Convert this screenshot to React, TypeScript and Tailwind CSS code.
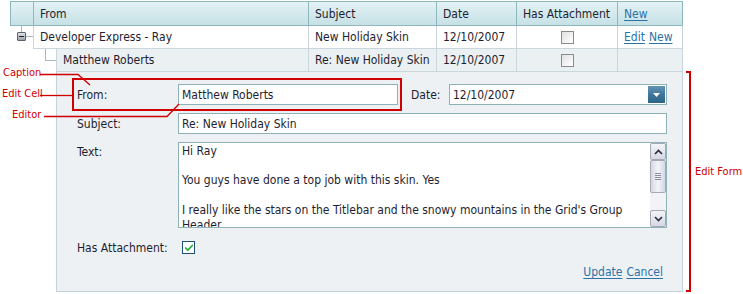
import { Check } from 'lucide-react';

const font = "font-['DejaVu_Sans_Condensed','DejaVu_Sans',sans-serif]";

// Column widths of the grid (indent, From, Subject, Date, Has Attachment, command)
const headerCell = 'flex h-full items-center border-l border-[#8fb8be] px-[6px]';
const dataCell = 'flex h-full items-center border-l border-[#c9d7dc] px-[6px]';

const GridCheck = () => (
  <span className="block h-[13px] w-[13px] border border-[#8a8a8a] bg-gradient-to-br from-[#e2e2e2] to-white" />
);

const Link = ({ children }: { children: string }) => (
  <a className="cursor-pointer text-[#2a73a8] underline underline-offset-2">{children}</a>
);

const Editor = ({ value, className = '' }: { value: string; className?: string }) => (
  <div className={`flex h-[21px] items-center border border-[#8db3b9] bg-white pl-[3px] ${className}`}>
    {value}
  </div>
);

const ScrollButton = ({ up }: { up?: boolean }) => (
  <div className="flex h-[17px] items-center justify-center rounded-[2px] border border-[#a4a9b8] bg-gradient-to-b from-[#f4f4f8] to-[#d6d8e2]">
    <svg width="9" height="6" viewBox="0 0 9 6">
      <path
        d={up ? 'M1 5 L4.5 1.5 L8 5' : 'M1 1 L4.5 4.5 L8 1'}
        fill="none"
        stroke="#2a2a3a"
        strokeWidth="1.6"
      />
    </svg>
  </div>
);

export default function App() {
  return (
    <div className={`relative h-[294px] w-[743px] overflow-hidden bg-white text-[12px] text-[#1e1e30] ${font}`}>
      <div className="ml-[10px] mt-[1px] w-[673px]">
        {/* Header */}
        <div className="flex h-[25px] border border-[#8fb8be] bg-gradient-to-b from-[#e3f2f5] to-[#c6e1e6]">
          <div className="w-[22px]" />
          <div className={`${headerCell} w-[275px]`}>From</div>
          <div className={`${headerCell} w-[128px]`}>Subject</div>
          <div className={`${headerCell} w-[80px]`}>Date</div>
          <div className={`${headerCell} w-[101px]`}>Has Attachment</div>
          <div className={`${headerCell} flex-1`}>
            <Link>New</Link>
          </div>
        </div>

        {/* Master row */}
        <div className="flex h-[23px]">
          <div className="relative w-[23px]">
            <span className="absolute left-[11px] top-0 h-[6px] w-px bg-[#a7b9c0]" />
            <span className="absolute left-[15px] top-[10px] h-px w-[8px] bg-[#a7b9c0]" />
            <span className="absolute left-[7px] top-[6px] flex h-[9px] w-[9px] items-center justify-center rounded-[1px] border border-[#5b646c] bg-gradient-to-b from-[#dfe3e6] to-[#9aa3aa]">
              <span className="h-px w-[5px] bg-[#222]" />
            </span>
          </div>
          <div className="flex flex-1 border-b border-r border-[#c9d7dc]">
            <div className={`${dataCell} w-[275px]`}>Developer Express - Ray</div>
            <div className={`${dataCell} w-[128px]`}>New Holiday Skin</div>
            <div className={`${dataCell} w-[80px]`}>12/10/2007</div>
            <div className={`${dataCell} w-[101px] justify-center`}>
              <GridCheck />
            </div>
            <div className={`${dataCell} flex-1 gap-[4px]`}>
              <Link>Edit</Link>
              <Link>New</Link>
            </div>
          </div>
        </div>

        {/* Detail row */}
        <div className="flex h-[23px]">
          <div className="w-[23px]" />
          <div className="relative w-[23px]">
            <span className="absolute left-[12px] top-0 h-[12px] w-px bg-[#a7b9c0]" />
            <span className="absolute left-[12px] top-[11px] h-px w-[11px] bg-[#a7b9c0]" />
          </div>
          <div className="flex flex-1 border-b border-r border-[#c9d7dc] bg-[#ebf0f3]">
            <div className={`${dataCell} w-[252px]`}>Matthew Roberts</div>
            <div className={`${dataCell} w-[128px]`}>Re: New Holiday Skin</div>
            <div className={`${dataCell} w-[80px]`}>12/10/2007</div>
            <div className={`${dataCell} w-[101px] justify-center`}>
              <GridCheck />
            </div>
            <div className={`${dataCell} flex-1`} />
          </div>
        </div>

        {/* Edit form */}
        <div className="flex h-[220px]">
          <div className="w-[46px]" />
          <div className="flex flex-1 flex-col border-b border-l border-r border-[#c3d3d9] bg-[#edf1f4] pl-[20px] pr-[15px] pt-[12px]">
            <div className="flex h-[21px] items-center">
              <div className="w-[101px]">From:</div>
              <Editor value="Matthew Roberts" className="w-[220px]" />
              <div className="ml-[13px] w-[38px]">Date:</div>
              <div className="flex h-[21px] flex-1 items-center justify-between border border-[#8db3b9] bg-white pl-[3px] pr-px">
                <span>12/10/2007</span>
                <span className="flex h-[17px] w-[17px] items-center justify-center bg-gradient-to-b from-[#6394b6] via-[#3f769b] to-[#2c6488]">
                  <svg width="9" height="6" viewBox="0 0 9 6">
                    <path d="M1 1 H8 L4.5 5 Z" fill="#fff" />
                  </svg>
                </span>
              </div>
            </div>
            <div className="mt-[8px] flex h-[21px] items-center">
              <div className="w-[101px]">Subject:</div>
              <Editor value="Re: New Holiday Skin" className="flex-1" />
            </div>
            <div className="mt-[8px] flex h-[86px]">
              <div className="w-[101px] pt-[1px]">Text:</div>
              <div className="flex flex-1 border border-[#8db3b9] bg-white">
                <div className="flex-1 overflow-hidden pl-[3px] pt-px leading-[14.7px]">
                  <p>Hi Ray</p>
                  <p>&nbsp;</p>
                  <p>You guys have done a top job with this skin. Yes</p>
                  <p>&nbsp;</p>
                  <p>I really like the stars on the Titlebar and the snowy mountains in the Grid's Group</p>
                  <p>Header</p>
                </div>
                <div className="flex w-[16px] flex-col bg-[#f4f4f6]">
                  <ScrollButton up />
                  <div className="flex h-[33px] items-center justify-center rounded-[2px] border border-[#a4a9b8] bg-gradient-to-r from-[#d4d8e4] via-[#f4f4f8] to-[#d4d8e4]">
                    <div className="flex flex-col gap-[1px]">
                      <span className="h-px w-[6px] bg-[#8a8fa0]" />
                      <span className="h-px w-[6px] bg-[#8a8fa0]" />
                      <span className="h-px w-[6px] bg-[#8a8fa0]" />
                      <span className="h-px w-[6px] bg-[#8a8fa0]" />
                    </div>
                  </div>
                  <div className="flex-1 bg-[#f3f3f7]" />
                  <ScrollButton />
                </div>
              </div>
            </div>
            <div className="mt-[13px] flex h-[13px] items-center">
              <div className="w-[105px]">Has Attachment:</div>
              <span className="flex h-[13px] w-[13px] items-center justify-center border border-[#1f4f78] bg-white">
                <Check className="h-[10px] w-[10px] text-[#22a838]" strokeWidth={4} />
              </span>
            </div>
            <div className="mt-[9px] flex justify-end gap-[4px] pr-[4px]">
              <Link>Update</Link>
              <Link>Cancel</Link>
            </div>
          </div>
        </div>
      </div>

      {/* Annotations */}
      <div className="absolute left-[72px] top-[78px] h-[33px] w-[330px] border-2 border-[#d00000]" />
      <span className="absolute left-[3px] top-[66px] text-[11px] leading-[14px] text-[#d00000]">Caption</span>
      <span className="absolute left-[2px] top-[87px] text-[11px] leading-[14px] text-[#d00000]">Edit Cell</span>
      <span className="absolute left-[12px] top-[108px] text-[11px] leading-[14px] text-[#d00000]">Editor</span>
      <span className="absolute left-[695px] top-[165px] text-[11px] leading-[14px] text-[#d00000]">Edit Form</span>
      <svg className="pointer-events-none absolute left-0 top-0" width="743" height="294">
        <g stroke="#d00000" fill="none" strokeWidth="1.3">
          <path d="M40 74.5 H78 L90 85" />
          <path d="M40 95.5 H72" />
          <path d="M44 116.5 H167 L179 104" />
          <path d="M686 72 H690 V291 H686" strokeWidth="2" />
        </g>
      </svg>
    </div>
  );
}
